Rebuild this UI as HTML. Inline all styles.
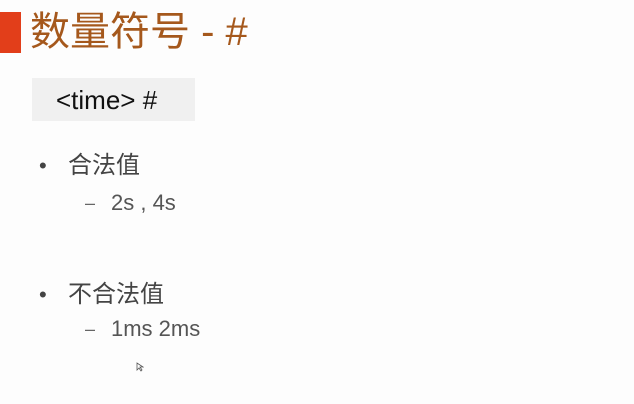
<html><head><style>
body{margin:0;width:634px;height:404px;background:#fdfdfd;position:relative;overflow:hidden;font-family:"Liberation Sans","Noto Sans CJK SC",sans-serif}
.a{position:absolute;white-space:nowrap}
</style></head><body>
<div class="a" style="left:0;top:12px;width:21px;height:41px;background:#e23e1a"></div>
<div class="a" style="left:30px;top:8px;font-size:40px;line-height:48px;color:#a5581c">数量符号 - #</div>
<div class="a" style="left:32px;top:78px;width:163px;height:43px;background:#f0f0f0"></div>
<div class="a" style="left:56px;top:86px;font-size:26px;line-height:28px;color:#111">&lt;time&gt; #</div>
<div class="a" style="left:39px;top:152px;font-size:22px;line-height:28px;color:#444">•</div>
<div class="a" style="left:68px;top:152px;font-size:24px;line-height:28px;color:#444">合法值</div>
<div class="a" style="left:85px;top:189px;font-size:18px;line-height:28px;color:#666">–</div>
<div class="a" style="left:111px;top:189px;font-size:22px;line-height:28px;color:#555">2s , 4s</div>
<div class="a" style="left:39px;top:281px;font-size:22px;line-height:28px;color:#444">•</div>
<div class="a" style="left:68px;top:281px;font-size:24px;line-height:28px;color:#444">不合法值</div>
<div class="a" style="left:85px;top:315px;font-size:18px;line-height:28px;color:#666">–</div>
<div class="a" style="left:111px;top:315px;font-size:22px;line-height:28px;color:#555">1ms 2ms</div>
<svg class="a" style="left:136px;top:362px" width="8" height="10"><path d="M1 1 L1 8 L3 6 L5 9 L6 8 L4 5 L7 5 Z" fill="#fff" stroke="#555" stroke-width=".8"/></svg>
</body></html>
